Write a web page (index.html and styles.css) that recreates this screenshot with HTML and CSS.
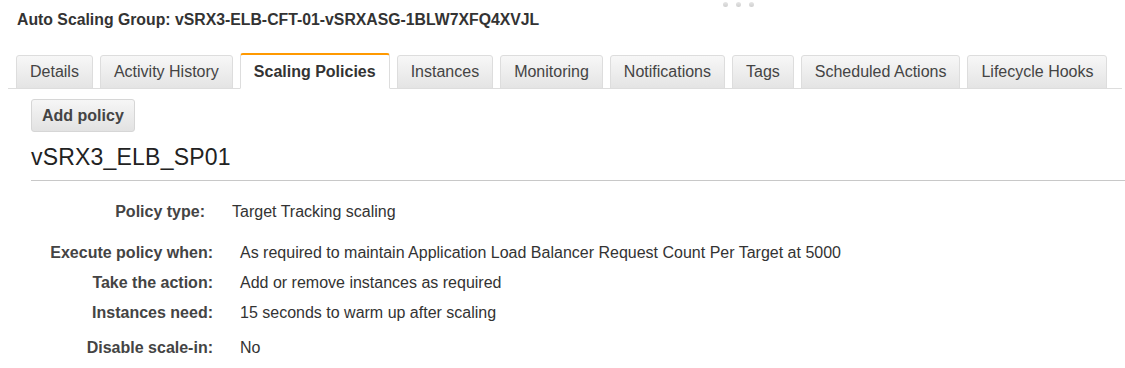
FILE: index.html
```html
<!DOCTYPE html>
<html lang="en">
<head>
  <meta charset="UTF-8">
  <meta name="viewport" content="width=device-width, initial-scale=1.0">
  <title>Auto Scaling Group</title>
  <link rel="stylesheet" href="styles.css">
</head>
<body>
  <div class="grip">
    <span></span><span></span><span></span>
  </div>
  <p class="group-title">Auto Scaling Group: vSRX3-ELB-CFT-01-vSRXASG-1BLW7XFQ4XVJL</p>

  <div class="tabs">
    <button class="tab">Details</button>
    <button class="tab">Activity History</button>
    <button class="tab active">Scaling Policies</button>
    <button class="tab">Instances</button>
    <button class="tab">Monitoring</button>
    <button class="tab">Notifications</button>
    <button class="tab">Tags</button>
    <button class="tab">Scheduled Actions</button>
    <button class="tab">Lifecycle Hooks</button>
  </div>

  <div class="panel">
    <button class="add-policy">Add policy</button>
    <h2 class="policy-name">vSRX3_ELB_SP01</h2>

    <table class="props props-type">
      <tr><th>Policy type:</th><td>Target Tracking scaling</td></tr>
    </table>

    <table class="props props-main">
      <tr><th>Execute policy when:</th><td>As required to maintain Application Load Balancer Request Count Per Target at 5000</td></tr>
      <tr><th>Take the action:</th><td>Add or remove instances as required</td></tr>
      <tr><th>Instances need:</th><td>15 seconds to warm up after scaling</td></tr>
      <tr class="last"><th>Disable scale-in:</th><td>No</td></tr>
    </table>
  </div>
</body>
</html>
```

FILE: styles.css
```css
body {
  margin: 0;
  font-family: 'Liberation Sans', Arial, Helvetica, sans-serif;
  color: #333;
  background-color: #fff;
  position: relative;
}
.grip{
  position: absolute;
  top: 2px;
  left: 723px;
  display: flex;
  gap: 8px;
}
.grip span{
  width: 5px;
  height: 5px;
  border-radius: 50%;
  background: linear-gradient(#e6e6e6, #cfcfcf);
}
.group-title{
  margin: 0;
  padding: 11px 0 0 17px;
  font-size: 15.8px;
  font-weight: bold;
  color: #333;
  line-height: 18px;
}
.tabs{
  display: flex;
  gap: 7px;
  margin: 24px 3px 0 8px;
  padding-left: 8px;
  border-bottom: 1px solid #dddddd;
  align-items: flex-end;
}
.tab{
  flex-shrink: 0;
  white-space: nowrap;
  font-family: inherit;
  font-size: 16px;
  color: #444;
  height: 34px;
  padding: 0 13px;
  margin-bottom: -1px;
  border: 1px solid #dddddd;
  border-radius: 3px 3px 0 0;
  background: linear-gradient(#f7f7f7, #e4e4e4);
  cursor: pointer;
}
.tab.active{
  height: 36px;
  font-weight: bold;
  color: #333;
  background: #fff;
  border-top: 2px solid #ff9900;
  border-bottom-color: #fff;
}
.panel{
  padding: 10px 0 0 31px;
}
.add-policy{
  font-family: inherit;
  font-size: 16px;
  font-weight: bold;
  color: #444;
  height: 33px;
  padding: 0 10px;
  border: 1px solid #d6d6d6;
  border-radius: 3px;
  background: linear-gradient(#f6f6f6, #e2e2e2);
  cursor: pointer;
}
.policy-name{
  margin: 11px 0 0;
  padding-bottom: 9px;
  font-size: 23px;
  letter-spacing: 0.2px;
  font-weight: normal;
  color: #222;
  line-height: 28px;
  border-bottom: 1px solid #c8c8c8;
}
.props{
  border-collapse: collapse;
  font-size: 16px;
  line-height: 30px;
}
.props th{
  padding: 0 27px 0 0;
  text-align: right;
  font-weight: bold;
  color: #444;
  white-space: nowrap;
}
.props td{
  color: #333;
  padding: 0;
}
.props-type{
  margin-top: 16px;
}
.props-type th{
  width: 174px;
  padding-right: 27px;
}
.props-main{
  margin-top: 11px;
}
.props-main th{
  width: 182px;
}
.props .last th,
.props .last td{
  padding-top: 5px;
}
```
